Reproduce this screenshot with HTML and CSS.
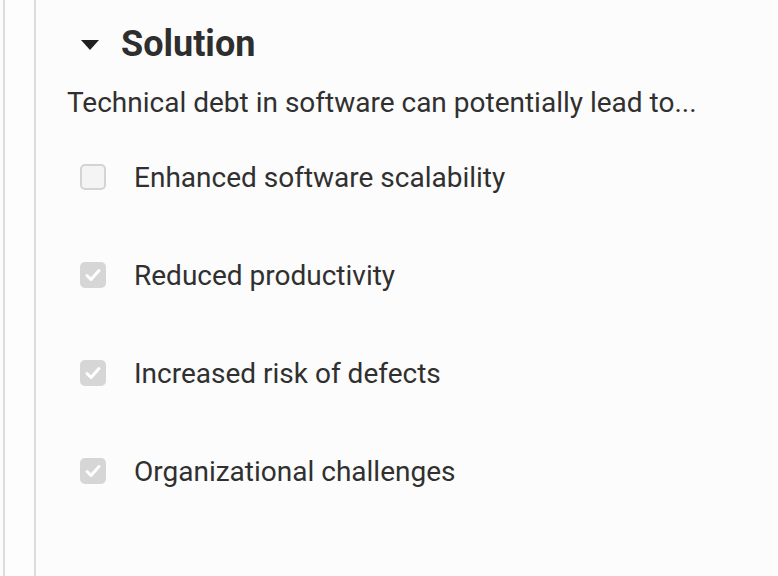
FILE: index.html
```html
<!DOCTYPE html>
<html>
<head>
<meta charset="utf-8">
<link rel="stylesheet" href="styles.css">
</head>
<body>
<div class="frame">
  <div class="rail"></div>
  <main class="panel">
    <h2 class="heading">
      <svg class="caret" width="20" height="12" viewBox="0 0 20 12"><path d="M1 1 L19 1 L10 11 Z" fill="#1f1f1f"/></svg>
      <span>Solution</span>
    </h2>
    <p class="question">Technical debt in software can potentially lead to...</p>
    <ul class="options">
      <li class="option"><span class="box"></span><span class="label">Enhanced software scalability</span></li>
      <li class="option"><span class="box checked"><svg width="26" height="26" viewBox="0 0 26 26"><path d="M7 13.5 L11 17.5 L19 8.5" fill="none" stroke="#fff" stroke-width="3" stroke-linecap="round" stroke-linejoin="round"/></svg></span><span class="label">Reduced productivity</span></li>
      <li class="option"><span class="box checked"><svg width="26" height="26" viewBox="0 0 26 26"><path d="M7 13.5 L11 17.5 L19 8.5" fill="none" stroke="#fff" stroke-width="3" stroke-linecap="round" stroke-linejoin="round"/></svg></span><span class="label">Increased risk of defects</span></li>
      <li class="option"><span class="box checked"><svg width="26" height="26" viewBox="0 0 26 26"><path d="M7 13.5 L11 17.5 L19 8.5" fill="none" stroke="#fff" stroke-width="3" stroke-linecap="round" stroke-linejoin="round"/></svg></span><span class="label">Organizational challenges</span></li>
    </ul>
  </main>
</div>
</body>
</html>
```
FILE: styles.css
```css
html, body {
  margin: 0;
  padding: 0;
  height: 100%;
  background: #fcfcfc;
  font-family: Roboto, "Liberation Sans", sans-serif;
  color: #2b2b2b;
}
.frame {
  display: flex;
  height: 576px;
  padding-left: 3px;
  box-sizing: border-box;
}
.rail {
  width: 29px;
  border-left: 2px solid #dcdcdc;
  border-right: 2px solid #dcdcdc;
  background: #fdfdfd;
}
.panel {
  flex: 1;
  padding: 22px 0 0 31px;
}
.heading {
  display: flex;
  align-items: center;
  gap: 21px;
  margin: 0 0 0 13px;
  font-size: 36px;
  font-weight: 700;
  line-height: 44px;
  color: #2e2e2e;
}
.caret {
  display: block;
  margin-top: 2px;
}
.question {
  margin: 20px 0 0 0;
  font-size: 28px;
  line-height: 34px;
  color: #303030;
}
.options {
  list-style: none;
  margin: 40px 0 0 0;
  padding: 0 0 0 13px;
  display: flex;
  flex-direction: column;
  gap: 64px;
}
.option {
  display: flex;
  align-items: center;
  gap: 28px;
  height: 34px;
}
.box {
  width: 26px;
  height: 26px;
  box-sizing: border-box;
  border: 2px solid #d4d4d4;
  border-radius: 5px;
  background: #f4f4f4;
  display: flex;
  align-items: center;
  justify-content: center;
  flex: none;
}
.box.checked {
  border-color: #d6d6d6;
  background: #d6d6d6;
}
.box svg {
  display: block;
  flex: none;
}
.label {
  font-size: 28px;
  color: #303030;
}
```
